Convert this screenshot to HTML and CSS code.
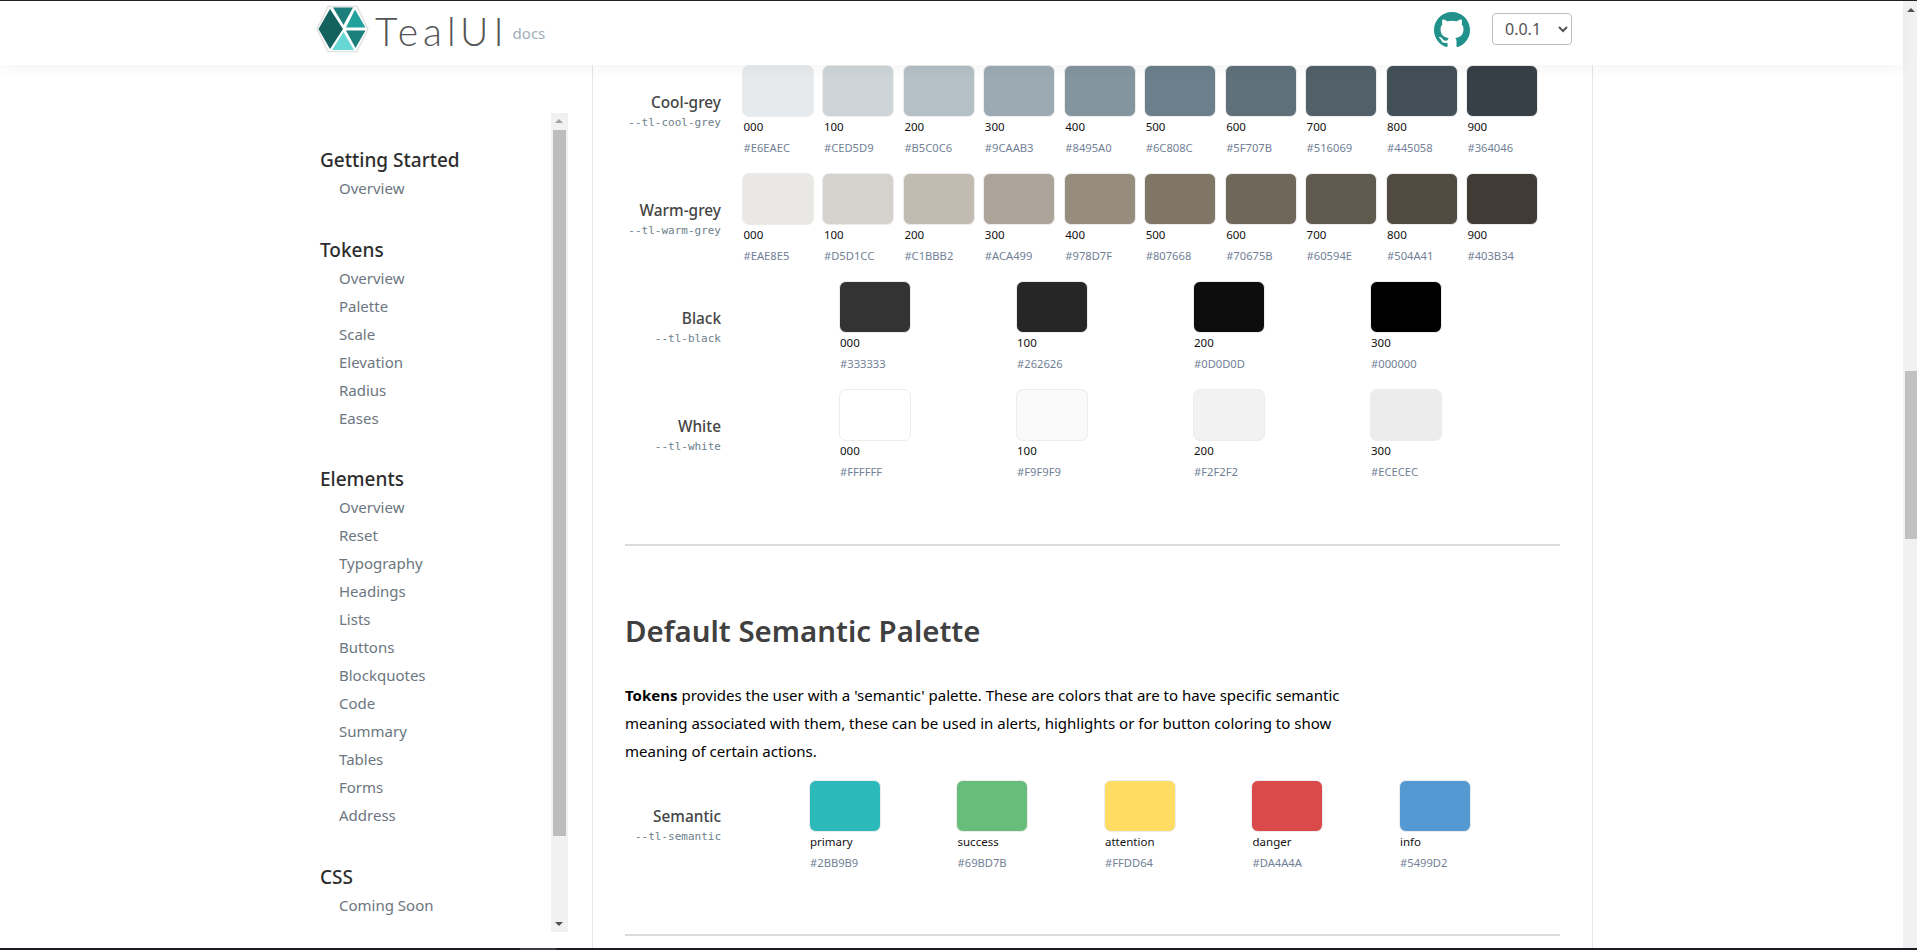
FILE: index.html
```html
<!DOCTYPE html>
<html lang="en">
<head>
<meta charset="utf-8">
<title>TealUI docs</title>
<link rel="stylesheet" href="styles.css">
</head>
<body>
<div class="app">
  <div class="edge-top"></div>
  <div class="window">
    <div class="page">
      <header class="header">
        <a class="brand">
          <svg class="logo" viewBox="314 3 56 52" width="56" height="52">
            <polygon points="328,6.500 357,6.500 368,29 357,51.500 328,51.500 317,29" fill="#fff" stroke="#e2e2e2" stroke-width="1.500" stroke-linejoin="round"/>
            <polygon points="330,9 343,29 330,49 318.500,29" fill="#14625f"/>
            <polygon points="333,7.500 353,7.500 343.500,25" fill="#1c7f7b"/>
            <polygon points="355,9.500 365.500,27.500 346,27.500" fill="#23a19c"/>
            <polygon points="346,30.500 365.500,30.500 355.500,48" fill="#1b7f7b"/>
            <polygon points="343.500,32 354,50 332,50" fill="#68d8d6"/>
          </svg>
          <span class="brand-name">TealUI</span>
          <span class="brand-tag">docs</span>
        </a>
        <div class="header-tools">
          <svg class="github" viewBox="0 0 16 16" width="36" height="36"><path fill="#21918c" d="M8 0C3.58 0 0 3.58 0 8c0 3.54 2.29 6.53 5.47 7.59.4.07.55-.17.55-.38 0-.19-.01-.82-.01-1.49-2.01.37-2.53-.49-2.69-.94-.09-.23-.48-.94-.82-1.13-.28-.15-.68-.52-.01-.53.63-.01 1.08.58 1.23.82.72 1.21 1.87.87 2.33.66.07-.52.28-.87.51-1.07-1.78-.2-3.64-.89-3.64-3.95 0-.87.31-1.59.82-2.15-.08-.2-.36-1.02.08-2.12 0 0 .67-.21 2.2.82.64-.18 1.32-.27 2-.27.68 0 1.36.09 2 .27 1.53-1.04 2.2-.82 2.2-.82.44 1.1.16 1.92.08 2.12.51.56.82 1.27.82 2.15 0 3.07-1.87 3.75-3.65 3.95.29.25.54.73.54 1.48 0 1.07-.01 1.93-.01 2.2 0 .21.15.46.55.38A8.013 8.013 0 0016 8c0-4.42-3.58-8-8-8z"/></svg>
          <select class="version"><option>0.0.1</option></select>
        </div>
      </header>
      <div class="body">
        <aside class="sidebar">
          <nav class="nav">
            <div class="nav-group">
              <h3 class="nav-title">Getting Started</h3>
              <a class="nav-link">Overview</a>
            </div>
            <div class="nav-group">
              <h3 class="nav-title">Tokens</h3>
              <a class="nav-link">Overview</a>
              <a class="nav-link">Palette</a>
              <a class="nav-link">Scale</a>
              <a class="nav-link">Elevation</a>
              <a class="nav-link">Radius</a>
              <a class="nav-link">Eases</a>
            </div>
            <div class="nav-group">
              <h3 class="nav-title">Elements</h3>
              <a class="nav-link">Overview</a>
              <a class="nav-link">Reset</a>
              <a class="nav-link">Typography</a>
              <a class="nav-link">Headings</a>
              <a class="nav-link">Lists</a>
              <a class="nav-link">Buttons</a>
              <a class="nav-link">Blockquotes</a>
              <a class="nav-link">Code</a>
              <a class="nav-link">Summary</a>
              <a class="nav-link">Tables</a>
              <a class="nav-link">Forms</a>
              <a class="nav-link">Address</a>
            </div>
            <div class="nav-group">
              <h3 class="nav-title">CSS</h3>
              <a class="nav-link">Coming Soon</a>
            </div>
          </nav>
          <div class="side-scroll">
            <span class="arrow-up"></span>
            <div class="side-thumb"></div>
            <span class="arrow-down"></span>
          </div>
        </aside>
        <main class="main">
          <section class="row">
            <div class="row-label"><div class="row-name">Cool-grey</div><code class="row-var">--tl-cool-grey</code></div>
            <div class="swatches swatches-ten">
              <div class="swatch"><div class="chip" style="background:#E6EAEC"></div><div class="chip-name">000</div><div class="chip-hex">#E6EAEC</div></div>
              <div class="swatch"><div class="chip" style="background:#CED5D9"></div><div class="chip-name">100</div><div class="chip-hex">#CED5D9</div></div>
              <div class="swatch"><div class="chip" style="background:#B5C0C6"></div><div class="chip-name">200</div><div class="chip-hex">#B5C0C6</div></div>
              <div class="swatch"><div class="chip" style="background:#9CAAB3"></div><div class="chip-name">300</div><div class="chip-hex">#9CAAB3</div></div>
              <div class="swatch"><div class="chip" style="background:#8495A0"></div><div class="chip-name">400</div><div class="chip-hex">#8495A0</div></div>
              <div class="swatch"><div class="chip" style="background:#6C808C"></div><div class="chip-name">500</div><div class="chip-hex">#6C808C</div></div>
              <div class="swatch"><div class="chip" style="background:#5F707B"></div><div class="chip-name">600</div><div class="chip-hex">#5F707B</div></div>
              <div class="swatch"><div class="chip" style="background:#516069"></div><div class="chip-name">700</div><div class="chip-hex">#516069</div></div>
              <div class="swatch"><div class="chip" style="background:#445058"></div><div class="chip-name">800</div><div class="chip-hex">#445058</div></div>
              <div class="swatch"><div class="chip" style="background:#364046"></div><div class="chip-name">900</div><div class="chip-hex">#364046</div></div>
            </div>
          </section>
          <section class="row">
            <div class="row-label"><div class="row-name">Warm-grey</div><code class="row-var">--tl-warm-grey</code></div>
            <div class="swatches swatches-ten">
              <div class="swatch"><div class="chip" style="background:#EAE8E5"></div><div class="chip-name">000</div><div class="chip-hex">#EAE8E5</div></div>
              <div class="swatch"><div class="chip" style="background:#D5D1CC"></div><div class="chip-name">100</div><div class="chip-hex">#D5D1CC</div></div>
              <div class="swatch"><div class="chip" style="background:#C1BBB2"></div><div class="chip-name">200</div><div class="chip-hex">#C1BBB2</div></div>
              <div class="swatch"><div class="chip" style="background:#ACA499"></div><div class="chip-name">300</div><div class="chip-hex">#ACA499</div></div>
              <div class="swatch"><div class="chip" style="background:#978D7F"></div><div class="chip-name">400</div><div class="chip-hex">#978D7F</div></div>
              <div class="swatch"><div class="chip" style="background:#807668"></div><div class="chip-name">500</div><div class="chip-hex">#807668</div></div>
              <div class="swatch"><div class="chip" style="background:#70675B"></div><div class="chip-name">600</div><div class="chip-hex">#70675B</div></div>
              <div class="swatch"><div class="chip" style="background:#60594E"></div><div class="chip-name">700</div><div class="chip-hex">#60594E</div></div>
              <div class="swatch"><div class="chip" style="background:#504A41"></div><div class="chip-name">800</div><div class="chip-hex">#504A41</div></div>
              <div class="swatch"><div class="chip" style="background:#403B34"></div><div class="chip-name">900</div><div class="chip-hex">#403B34</div></div>
            </div>
          </section>
          <section class="row">
            <div class="row-label"><div class="row-name">Black</div><code class="row-var">--tl-black</code></div>
            <div class="swatches swatches-four">
              <div class="swatch"><div class="chip" style="background:#333333"></div><div class="chip-name">000</div><div class="chip-hex">#333333</div></div>
              <div class="swatch"><div class="chip" style="background:#262626"></div><div class="chip-name">100</div><div class="chip-hex">#262626</div></div>
              <div class="swatch"><div class="chip" style="background:#0D0D0D"></div><div class="chip-name">200</div><div class="chip-hex">#0D0D0D</div></div>
              <div class="swatch"><div class="chip" style="background:#000000"></div><div class="chip-name">300</div><div class="chip-hex">#000000</div></div>
            </div>
          </section>
          <section class="row">
            <div class="row-label"><div class="row-name">White</div><code class="row-var">--tl-white</code></div>
            <div class="swatches swatches-four">
              <div class="swatch"><div class="chip" style="background:#FFFFFF"></div><div class="chip-name">000</div><div class="chip-hex">#FFFFFF</div></div>
              <div class="swatch"><div class="chip" style="background:#F9F9F9"></div><div class="chip-name">100</div><div class="chip-hex">#F9F9F9</div></div>
              <div class="swatch"><div class="chip" style="background:#F2F2F2"></div><div class="chip-name">200</div><div class="chip-hex">#F2F2F2</div></div>
              <div class="swatch"><div class="chip" style="background:#ECECEC"></div><div class="chip-name">300</div><div class="chip-hex">#ECECEC</div></div>
            </div>
          </section>
          <hr class="rule rule-first">
          <h2 class="title">Default Semantic Palette</h2>
          <p class="lead"><strong>Tokens</strong> provides the user with a 'semantic' palette. These are colors that are to have specific semantic<br>meaning associated with them, these can be used in alerts, highlights or for button coloring to show<br>meaning of certain actions.</p>
          <section class="row">
            <div class="row-label row-label-tight"><div class="row-name">Semantic</div><code class="row-var">--tl-semantic</code></div>
            <div class="swatches swatches-five">
              <div class="swatch"><div class="chip" style="background:#2BB9B9"></div><div class="chip-name">primary</div><div class="chip-hex">#2BB9B9</div></div>
              <div class="swatch"><div class="chip" style="background:#69BD7B"></div><div class="chip-name">success</div><div class="chip-hex">#69BD7B</div></div>
              <div class="swatch"><div class="chip" style="background:#FFDD64"></div><div class="chip-name">attention</div><div class="chip-hex">#FFDD64</div></div>
              <div class="swatch"><div class="chip" style="background:#DA4A4A"></div><div class="chip-name">danger</div><div class="chip-hex">#DA4A4A</div></div>
              <div class="swatch"><div class="chip" style="background:#5499D2"></div><div class="chip-name">info</div><div class="chip-hex">#5499D2</div></div>
            </div>
          </section>
          <hr class="rule rule-last">
        </main>
      </div>
    </div>
    <div class="page-scroll">
      <span class="arrow-up arrow-dark"></span>
      <div class="page-thumb"></div>
    </div>
  </div>
  <div class="edge-bottom"><div class="edge-tab"></div></div>
</div>
</body>
</html>
```

FILE: styles.css
```css
* { box-sizing: border-box; }
html, body { margin: 0; height: 100%; overflow: hidden; }
body { font-family: "Noto Sans", "Open Sans", sans-serif; background: #fff; color: #000; }

.app { height: 950px; display: flex; flex-direction: column; }
.edge-top { height: 1px; background: #222; flex: none; }
.edge-bottom { height: 2px; background: #1c1c24; flex: none; padding-left: 520px; }
.edge-tab { width: 36px; height: 2px; background: #3c3c44; }
.window { flex: 1; display: flex; min-height: 0; }
.page { flex: 1; display: flex; flex-direction: column; min-width: 0; }
.page-scroll { position: relative; width: 14px; flex: none; background: #f1f1f1; padding: 370px 0 0 2px; }
.page-thumb { width: 12px; height: 168px; background: #c1c1c1; }

.header { height: 64px; flex: none; background: #fff; display: flex; align-items: flex-start; justify-content: space-between; padding: 0 331px 0 314px; box-shadow: 0 4px 14px rgba(0,0,0,.045); position: relative; z-index: 2; }
.brand { display: flex; align-items: flex-start; }
.logo { margin-top: 2px; display: block; }
.brand-name { font-family: Lato, sans-serif; font-weight: 300; font-size: 39px; line-height: 46px; letter-spacing: 5px; color: #555; margin: 7px 0 0 5px; }
.brand-tag { font-size: 15px; line-height: 20px; color: #a0aeb8; margin: 22px 0 0 4px; }
.header-tools { display: flex; align-items: flex-start; gap: 22px; }
.github { margin-top: 11px; display: block; }
.version { width: 80px; height: 32px; margin-top: 12px; padding: 0 8px; font: 16px "Noto Sans", sans-serif; color: #555; background: #fff; border: 1px solid #b5c0c6; border-radius: 4px; }

.body { flex: 1; display: flex; padding-left: 320px; min-height: 0; overflow: hidden; }
.sidebar { width: 272px; flex: none; display: flex; padding-right: 24px; }
.nav { width: 231px; flex: none; padding-top: 79px; }
.nav-group { margin-bottom: 31.600px; }
.nav-title { margin: 0 0 -2px; font-size: 19px; font-weight: 500; line-height: 32px; color: #2d2d2d; }
.nav-link { display: block; padding-left: 19px; font-size: 15px; line-height: 28px; color: #6c7680; }
.side-scroll { position: relative; width: 17px; height: 819px; margin-top: 48px; background: #f1f1f1; padding: 17px 2px 0; flex: none; }
.side-thumb { width: 13px; height: 706px; background: #bdbdbd; }

.arrow-up, .arrow-down { position: absolute; left: 4px; width: 0; height: 0; border-left: 4px solid transparent; border-right: 4px solid transparent; }
.arrow-up { top: 6px; border-bottom: 4px solid #a3a3a3; }
.arrow-down { bottom: 6px; border-top: 4px solid #505050; }
.arrow-dark { left: 4px; top: 7px; border-bottom-color: #505050; }

.main { width: 1001px; flex: none; border-left: 1px solid #e6e6e6; border-right: 1px solid #e6e6e6; padding-left: 32px; }
.row { height: 108px; display: flex; }
.row-label { width: 96px; flex: none; text-align: right; padding-top: 26px; }
.row-label-tight { padding-top: 25px; }
.row-name { font-size: 15.400px; font-weight: 500; line-height: 24px; color: #444; }
.row-var { display: block; font-family: "DejaVu Sans Mono", monospace; font-size: 11px; line-height: 16px; color: #6c808c; }
.swatches { display: flex; margin-left: 21px; width: 800px; }
.swatches-ten { column-gap: 8.440px; }
.swatches-four { column-gap: 105px; padding-left: 96.500px; }
.swatches-five { column-gap: 75.500px; padding-left: 66.500px; }
.swatch { width: 72px; flex: none; }
.chip { height: 52px; border-radius: 7px; border: 1px solid #ececec; }
.chip-name { margin: 1px 0 0 1.500px; font-size: 11.500px; line-height: 18px; color: #111; }
.chip-hex { margin: 3px 0 0 1.500px; font-size: 11.200px; line-height: 18px; color: #718096; }

.rule { width: 935px; margin: 0; border: 0; border-top: 2px solid #dcdcdc; }
.rule-first { margin-top: 47px; }
.rule-last { margin-top: 46px; }
.title { margin: 61px 0 0; font-size: 29.400px; font-weight: 600; line-height: 48px; color: #404040; }
.lead { margin: 26px 0 15px; font-size: 15px; line-height: 28px; color: #000; }
```
